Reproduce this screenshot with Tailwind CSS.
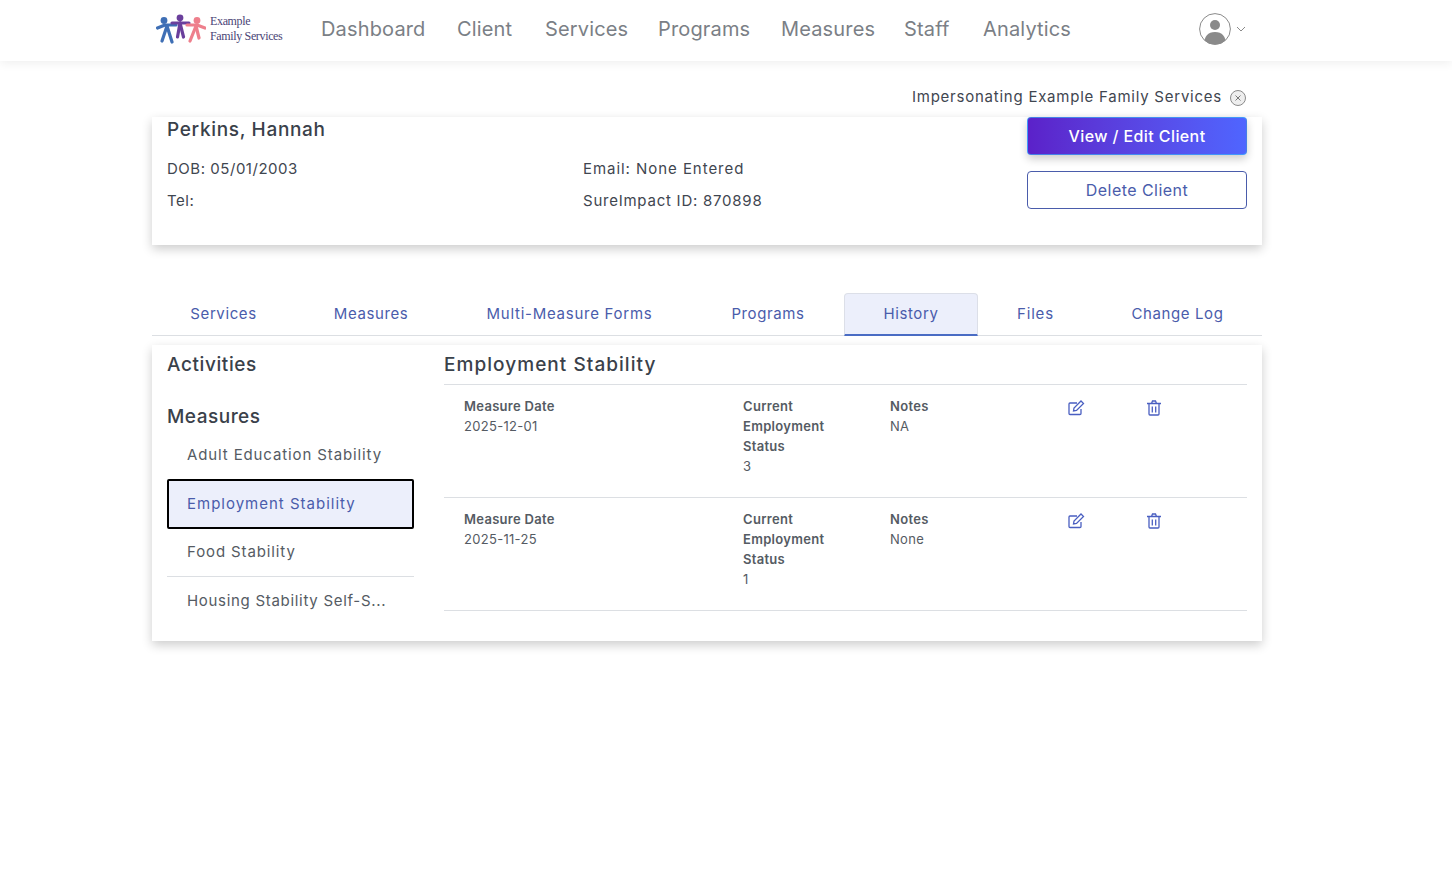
<!doctype html>
<html lang="en">
<head>
<meta charset="utf-8">
<title>Client history</title>
<script src="https://cdn.jsdelivr.net/npm/@tailwindcss/browser@4"></script>
</head>
<body class="bg-white font-['Inter',sans-serif] text-[#3f4650] h-[880px] overflow-hidden">
<header class="h-[61px] bg-white shadow-[0_2px_10px_rgba(0,0,0,0.07)] flex items-center pl-[156px] relative">
  <div class="w-[126px] flex items-center shrink-0 pb-[3px]">
    <svg width="50" height="30" viewBox="0 0 50 30" class="shrink-0">
      <g fill="none" stroke-linecap="round" stroke-linejoin="round">
        <g stroke="#3f6fb5" stroke-width="3.2"><path d="M1.5 14 L9 11 L20 11"/><path d="M11 12 L6 27"/><path d="M11 12 L16 28"/></g>
        <circle cx="8" cy="6.5" r="3.4" fill="#3f6fb5"/>
        <g stroke="#6a3f9c" stroke-width="3.2"><path d="M16 9 L33 9"/><path d="M24 9 L21.5 23"/><path d="M24 9 L27.5 23"/></g>
        <circle cx="24" cy="3.8" r="3.4" fill="#6a3f9c"/>
        <g stroke="#ee7f8c" stroke-width="3.2"><path d="M31 11 L41 11 L49 14"/><path d="M40 12 L34 27"/><path d="M40 12 L43 24"/></g>
        <circle cx="41" cy="6.5" r="3.4" fill="#ee7f8c"/>
      </g>
    </svg>
    <div class="font-['Liberation_Serif',serif] text-[12px] leading-[15px] text-[#4a4475] tracking-[-0.35px] ml-[4px] whitespace-nowrap"><div>Example</div><div>Family Services</div></div>
  </div>
  <nav class="flex items-center ml-[39px] pb-[3px] text-[20px] text-[#7b7f86] tracking-[0.15px]">
    <span class="w-[136px]">Dashboard</span><span class="w-[88px]">Client</span><span class="w-[113px]">Services</span><span class="w-[123px]">Programs</span><span class="w-[123px]">Measures</span><span class="w-[79px]">Staff</span><span>Analytics</span>
  </nav>
  <div class="absolute left-[1199px] top-[13px] flex items-center">
    <svg width="32" height="32" viewBox="0 0 32 32"><defs><clipPath id="c"><circle cx="16" cy="16" r="15.4"/></clipPath></defs><circle cx="16" cy="16" r="15.4" fill="#fff" stroke="#8a8a8a" stroke-width="1"/><g clip-path="url(#c)" fill="#8a8a8a"><circle cx="16" cy="12" r="5"/><path d="M5 32c0-9 4-13 11-13s11 4 11 13z"/></g></svg>
    <svg width="10" height="6" viewBox="0 0 10 6" class="ml-[5px]"><path d="M1 1l4 4 4-4" fill="none" stroke="#8a8a8a"/></svg>
  </div>
</header>

<main class="w-[1110px] ml-[152px]">
  <div class="h-[56px] flex items-start justify-end pr-[16px] pt-[26px] text-[15px] leading-[20px] text-[#3f4650]">
    <span class="tracking-[0.76px]">Impersonating Example Family Services</span>
    <svg width="16" height="16" viewBox="0 0 16 16" class="ml-[8px] mt-[3px]"><circle cx="8" cy="8" r="7.5" fill="#eee" stroke="#8a8a8a"/><path d="M5.5 5.5l5 5M10.5 5.5l-5 5" stroke="#777"/></svg>
  </div>

  <section class="h-[128px] bg-white shadow-[0_4px_10px_rgba(0,0,0,0.2)] flex justify-between pl-[15px] pr-[15px]">
    <div class="flex-1 pt-[1px]">
      <h2 class="text-[19px] leading-[24px] font-medium text-[#3a414a] tracking-[0.67px]">Perkins, Hannah</h2>
      <div class="grid grid-cols-[416px_1fr] gap-y-[12px] mt-[17px] text-[15px] leading-[20px]">
        <div class="tracking-[0.53px]">DOB: 05/01/2003</div><div class="tracking-[0.95px]">Email: None Entered</div>
        <div class="tracking-[0.53px]">Tel:</div><div class="tracking-[0.76px]">SureImpact ID: 870898</div>
      </div>
    </div>
    <div class="w-[220px] flex flex-col gap-[16px]">
      <button class="h-[38px] pb-[1px] rounded-[4px] border border-[#38bdf8]/60 bg-gradient-to-r from-[#5b21c9] to-[#4f65ff] text-white text-[16px] font-medium tracking-[0.4px] shadow-[0_4px_8px_rgba(0,0,0,0.2)]">View / Edit Client</button>
      <button class="h-[38px] pb-[1px] rounded-[4px] border border-[#4a5cab] bg-white text-[#4a5cab] text-[16px] tracking-[0.45px]">Delete Client</button>
    </div>
  </section>

  <div class="mt-[48px] h-[43px] flex border-b border-[#dcdfe3] text-[15px] text-[#4a5cab] tracking-[0.6px]">
    <a class="w-[143px] flex items-center justify-center">Services</a>
    <a class="w-[152px] flex items-center justify-center">Measures</a>
    <a class="w-[245px] flex items-center justify-center tracking-[0.74px]">Multi-Measure Forms</a>
    <a class="w-[152px] flex items-center justify-center">Programs</a>
    <a class="w-[134px] flex items-center justify-center bg-[#eceffb] border border-[#dcdfe8] border-b-2 border-b-[#4a6cc4] rounded-t-[4px] h-[43px]">History</a>
    <a class="w-[115px] flex items-center justify-center tracking-[0.8px]">Files</a>
    <a class="w-[169px] flex items-center justify-center">Change Log</a>
  </div>

  <section class="mt-[9px] h-[296px] bg-white shadow-[0_4px_10px_rgba(0,0,0,0.2)] flex px-[15px]">
    <aside class="w-[247px] shrink-0 pt-[8px]">
      <h3 class="text-[19px] leading-[24px] font-medium text-[#3a414a] tracking-[0.6px]">Activities</h3>
      <h3 class="text-[19px] leading-[24px] font-medium text-[#3a414a] mt-[28px] tracking-[0.5px]">Measures</h3>
      <ul class="mt-[2px] text-[15px] leading-[20px] text-[#555b63] tracking-[0.88px]">
        <li class="h-[48px] pl-[20px] flex items-center">Adult Education Stability</li>
        <li class="h-[50px] pl-[18px] flex items-center rounded-[2px] border-2 border-black bg-[#eceffb] text-[#4a5cab] tracking-[1px]">Employment Stability</li>
        <li class="h-[48px] pl-[20px] pb-[2px] flex items-center border-b border-[#dcdfe3]">Food Stability</li>
        <li class="h-[48px] pl-[20px] flex items-center tracking-[0.7px]">Housing Stability Self-S...</li>
      </ul>
    </aside>
    <div class="flex-1 ml-[30px] pt-[8px]">
      <h3 class="text-[19px] leading-[24px] font-medium text-[#3a414a] pb-[7px] border-b border-[#dcdfe3] tracking-[1.05px]">Employment Stability</h3>
      <article class="h-[113px] border-b border-[#dcdfe3] grid grid-cols-[279px_147px_178px_79px_auto] pl-[20px] pt-[11px] text-[13px] leading-[20px] text-[#555b63] tracking-[0.3px]">
        <div><div class="font-semibold">Measure Date</div><div>2025-12-01</div></div>
        <div><div class="font-semibold w-[90px]">Current Employment Status</div><div>3</div></div>
        <div><div class="font-semibold">Notes</div><div>NA</div></div>
        <div class="pt-[4px]"><svg width="17" height="16" viewBox="0 0 17 16" fill="none" stroke="#4a5fc1" stroke-width="1.3"><path d="M13 9v4.5a1 1 0 0 1-1 1H2a1 1 0 0 1-1-1V4a1 1 0 0 1 1-1h7"/><path d="M6 8l-.5 3 3-.5 7-7-2.5-2.5z"/></svg></div>
        <div class="pt-[4px]"><svg width="14" height="16" viewBox="0 0 14 16" fill="none" stroke="#4a5fc1" stroke-width="1.3"><path d="M0 3.5h14M2 3.5v10.5a1 1 0 0 0 1 1h8a1 1 0 0 0 1-1V3.5M4.5 3.5L5.5 1h3l1 2.5M5.3 6.5v6M8.7 6.5v6"/></svg></div>
      </article>
      <article class="h-[113px] border-b border-[#dcdfe3] grid grid-cols-[279px_147px_178px_79px_auto] pl-[20px] pt-[11px] text-[13px] leading-[20px] text-[#555b63] tracking-[0.3px]">
        <div><div class="font-semibold">Measure Date</div><div>2025-11-25</div></div>
        <div><div class="font-semibold w-[90px]">Current Employment Status</div><div>1</div></div>
        <div><div class="font-semibold">Notes</div><div>None</div></div>
        <div class="pt-[4px]"><svg width="17" height="16" viewBox="0 0 17 16" fill="none" stroke="#4a5fc1" stroke-width="1.3"><path d="M13 9v4.5a1 1 0 0 1-1 1H2a1 1 0 0 1-1-1V4a1 1 0 0 1 1-1h7"/><path d="M6 8l-.5 3 3-.5 7-7-2.5-2.5z"/></svg></div>
        <div class="pt-[4px]"><svg width="14" height="16" viewBox="0 0 14 16" fill="none" stroke="#4a5fc1" stroke-width="1.3"><path d="M0 3.5h14M2 3.5v10.5a1 1 0 0 0 1 1h8a1 1 0 0 0 1-1V3.5M4.5 3.5L5.5 1h3l1 2.5M5.3 6.5v6M8.7 6.5v6"/></svg></div>
      </article>
    </div>
  </section>
</main>
</body>
</html>
